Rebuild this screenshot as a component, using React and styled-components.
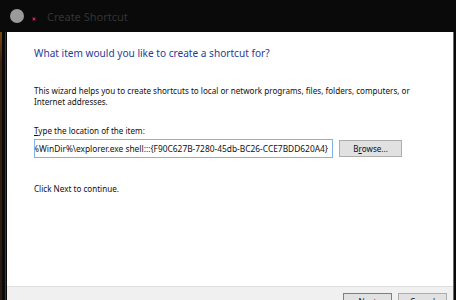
import styled, { createGlobalStyle } from "styled-components";

const Global = createGlobalStyle`
  html, body {
    margin: 0;
    padding: 0;
    background: #0a0a0a;
    overflow: hidden;
  }
`;

const font = `"Noto Sans", "Open Sans", "Liberation Sans", sans-serif`;

export default function App() {
  return (
    <>
      <Global />
      <Screen>
        <TitleBar>
          <Orb />
          <Dot />
          <Title>Create Shortcut</Title>
        </TitleBar>
        <Body>
          <LeftEdge />
          <Dialog>
            <Content>
              <Heading>What item would you like to create a shortcut for?</Heading>
              <Text>
                This wizard helps you to create shortcuts to local or network programs, files, folders, computers, or
                Internet addresses.
              </Text>
              <Label>
                <u>T</u>ype the location of the item:
              </Label>
              <InputRow>
                <Field>
                  <span>%WinDir%\explorer.exe shell:::{"{"}F90C627B-7280-45db-BC26-CCE7BDD620A4{"}"}</span>
                </Field>
                <Button>
                  B<u>r</u>owse...
                </Button>
              </InputRow>
              <Text $top={25}>Click Next to continue.</Text>
            </Content>
            <Footer>
              <Button $primary $w={49}>Next</Button>
              <Button $w={49}>Cancel</Button>
            </Footer>
          </Dialog>
          <RightEdge />
        </Body>
      </Screen>
    </>
  );
}

const Screen = styled.div`
  width: 456px;
  height: 300px;
  display: flex;
  flex-direction: column;
  background: #0a0a0a;
  font-family: ${font};
  overflow: hidden;
`;

const TitleBar = styled.div`
  height: 32px;
  display: flex;
  align-items: center;
  padding-left: 10px;
  flex-shrink: 0;
`;

const Orb = styled.div`
  width: 14px;
  height: 14px;
  border-radius: 50%;
  background: #9a9a9a;
`;

const Dot = styled.div`
  width: 2px;
  height: 2px;
  margin: 6px 0 0 9px;
  background: #c0304c;
  box-shadow: 0 0 1px 1px #4a1020;
`;

const Title = styled.div`
  margin-left: 12px;
  font-size: 11px;
  color: #333333;
`;

const Body = styled.div`
  height: 268px;
  display: flex;
  flex-shrink: 0;
`;

const LeftEdge = styled.div`
  width: 7px;
  flex-shrink: 0;
  background:
    linear-gradient(90deg, transparent 0 5px, #3a3a3a 5px 6px, transparent 6px),
    linear-gradient(180deg, #7a4a10 0, #3a2410 30px, #2a1a10 100%);
  background-size: 100% 100%, 2px 100%;
  background-repeat: no-repeat;
`;

const RightEdge = styled.div`
  width: 2px;
  flex-shrink: 0;
  border-left: 1px solid #6a6a6a;
  background: #0a0a0a;
`;

const Dialog = styled.div`
  flex: 1;
  display: flex;
  flex-direction: column;
  background: #ffffff;
`;

const Content = styled.div`
  height: 254px;
  box-sizing: border-box;
  padding: 14px 0 0 27px;
  flex-shrink: 0;
`;

const Heading = styled.div`
  font-size: 10.1px;
  color: #1f3c98;
  line-height: 14px;
  white-space: nowrap;
`;

const Text = styled.div`
  margin-top: ${(p) => p.$top ?? 25}px;
  font-size: 8.1px;
  line-height: 11px;
  color: #111;
  width: 390px;
`;

const Label = styled.div`
  margin-top: 18px;
  font-size: 8.1px;
  line-height: 11px;
  color: #111;
`;

const InputRow = styled.div`
  display: flex;
  align-items: center;
  gap: 6px;
  margin-top: 3px;
`;

const Field = styled.div`
  width: 299px;
  height: 19px;
  box-sizing: border-box;
  border: 1px solid #7eb4ea;
  display: flex;
  justify-content: flex-end;
  align-items: center;
  overflow: hidden;
  white-space: nowrap;
  padding-right: 4px;
  font-size: 8.4px;
  color: #111;
`;

const Button = styled.div`
  width: ${(p) => p.$w ?? 63}px;
  height: 17px;
  box-sizing: border-box;
  display: flex;
  align-items: center;
  justify-content: center;
  background: #e1e1e1;
  border: 1px solid ${(p) => (p.$primary ? "#3c8fdc" : "#adadad")};
  font-size: 8.1px;
  color: #111;
  flex-shrink: 0;
`;

const Footer = styled.div`
  flex: 1;
  min-height: 0;
  border-top: 1px solid #dfdfdf;
  background: #f0f0f0;
  display: flex;
  justify-content: flex-end;
  align-items: flex-start;
  gap: 6px;
  padding: 6px 6px 0 0;
  overflow: hidden;
`;
